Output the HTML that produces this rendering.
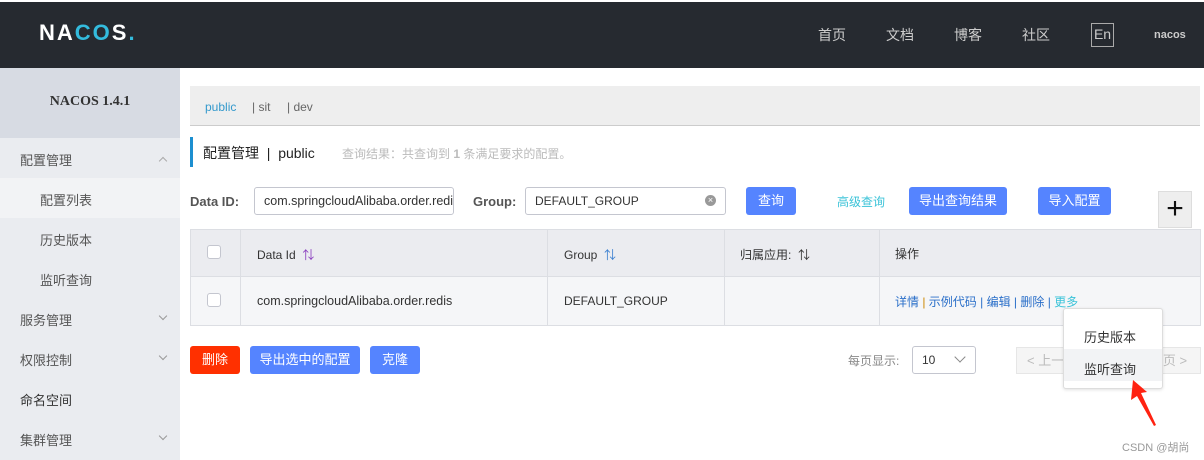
<!DOCTYPE html>
<html><head><meta charset="utf-8"><style>
*{box-sizing:border-box;margin:0;padding:0}
body{width:1204px;height:460px;overflow:hidden;background:#fff;font-family:"Liberation Sans","Noto Sans CJK SC",sans-serif;font-size:12px;color:#333;position:relative}
.a{position:absolute}
.top{left:0;top:2px;width:1204px;height:66px;background:#262a30}
.nav{color:#ccc;font-size:14px;top:25px}
.side{left:0;top:68px;width:180px;height:392px;background:#eaecf0}
.si{position:absolute;left:20px;font-size:13px;color:#555}
.sub{left:40px}
.chev{position:absolute;left:160px;width:6px;height:6px;border-right:1px solid #999;border-bottom:1px solid #999;transform:rotate(45deg)}
.btn{position:absolute;background:#5584ff;color:#fff;border-radius:3px;font-size:13px;text-align:center;line-height:27px;height:28px}
.inp{position:absolute;border:1px solid #c4c6cf;border-radius:3px;height:28px;line-height:26px;padding-left:9px;font-size:12px;background:#fff;overflow:hidden;white-space:nowrap}
.cb{position:absolute;width:14px;height:14px;border:1px solid #c4c6cf;border-radius:3px;background:#fff}
.vl{position:absolute;width:1px;background:#dcdee3}
.lk{color:#2a6fc9}
</style></head><body>
<div class="a top"></div>
<div class="a" style="left:39px;top:20px;color:#fff;font-size:22px;font-weight:bold;letter-spacing:2px">NA<span style="color:#3bd">CO</span>S<span style="color:#3bd">.</span></div>
<div class="a nav" style="left:818px">首页</div>
<div class="a nav" style="left:886px">文档</div>
<div class="a nav" style="left:954px">博客</div>
<div class="a nav" style="left:1022px">社区</div>
<div class="a" style="left:1091px;top:23px;width:23px;height:24px;border:1px solid #aaa;color:#ccc;font-size:14px;text-align:center;line-height:21px">En</div>
<div class="a" style="left:1154px;top:29px;color:#ccc;font-size:11px;font-weight:bold">nacos</div>

<div class="a side"></div>
<div class="a" style="left:0;top:68px;width:180px;height:70px;background:#d7dbe3;text-align:center;line-height:68px;font-weight:bold;font-size:14px;color:#333;font-family:'Liberation Serif','Noto Serif CJK SC',serif">NACOS 1.4.1</div>
<div class="a" style="left:0;top:178px;width:180px;height:40px;background:#f2f3f5"></div>
<div class="si" style="top:150px">配置管理</div><div class="chev" style="top:158px;transform:rotate(225deg);border-color:#aaa"></div>
<div class="si sub" style="top:190px">配置列表</div>
<div class="si sub" style="top:230px">历史版本</div>
<div class="si sub" style="top:270px">监听查询</div>
<div class="si" style="top:310px">服务管理</div><div class="chev" style="top:313px"></div>
<div class="si" style="top:350px">权限控制</div><div class="chev" style="top:353px"></div>
<div class="si" style="top:390px;color:#333">命名空间</div>
<div class="si" style="top:430px">集群管理</div><div class="chev" style="top:433px"></div>

<div class="a" style="left:190px;top:86px;width:1010px;height:40px;background:#eee;border-bottom:1px solid #ccc"></div>
<div class="a" style="left:205px;top:100px;color:#39c;font-size:12px">public</div>
<div class="a" style="left:252px;top:100px;color:#666">| sit</div>
<div class="a" style="left:287px;top:100px;color:#666">| dev</div>

<div class="a" style="left:190px;top:137px;width:3px;height:30px;background:#1c8fd0"></div>
<div class="a" style="left:203px;top:143px;font-size:14px;color:#222">配置管理 &nbsp;|&nbsp; public</div>
<div class="a" style="left:342px;top:145px;font-size:12px;color:#bbb">查询结果：共查询到 <b>1</b> 条满足要求的配置。</div>

<div class="a" style="left:190px;top:194px;font-size:13px;font-weight:bold;color:#555">Data ID:</div>
<div class="inp" style="left:254px;top:187px;width:200px;font-size:12.5px">com.springcloudAlibaba.order.redis</div>
<div class="a" style="left:473px;top:194px;font-size:13px;font-weight:bold;color:#555">Group:</div>
<div class="inp" style="left:525px;top:187px;width:201px">DEFAULT_GROUP</div>
<div class="a" style="left:705px;top:195px;width:11px;height:11px;border-radius:50%;background:#999;color:#fff;font-size:9px;line-height:11px;text-align:center">×</div>
<div class="btn" style="left:746px;top:187px;width:50px">查询</div>
<div class="a" style="left:837px;top:193px;color:#3bc3d8;font-size:12px">高级查询</div>
<div class="btn" style="left:909px;top:187px;width:98px">导出查询结果</div>
<div class="btn" style="left:1038px;top:187px;width:73px">导入配置</div>
<div class="a" style="left:1158px;top:191px;width:34px;height:37px;background:#eee;border:1px solid #ddd;text-align:center;line-height:33px;font-size:30px;color:#111;font-weight:300">+</div>

<div class="a" style="left:190px;top:229px;width:1011px;height:97px;border:1px solid #dcdee3;background:#f5f6f8"></div>
<div class="a" style="left:191px;top:230px;width:1009px;height:47px;background:#ebecf0;border-bottom:1px solid #dcdee3"></div>
<div class="vl" style="left:240px;top:230px;height:95px"></div>
<div class="vl" style="left:547px;top:230px;height:95px"></div>
<div class="vl" style="left:724px;top:230px;height:95px"></div>
<div class="vl" style="left:879px;top:230px;height:95px"></div>
<div class="cb" style="left:207px;top:245px"></div>
<div class="cb" style="left:207px;top:293px"></div>
<div class="a" style="left:257px;top:246px;color:#333">Data Id &nbsp;<span style="color:#8a3fbf">⇅</span></div>
<div class="a" style="left:564px;top:246px;color:#333">Group &nbsp;<span style="color:#3a7fd0">⇅</span></div>
<div class="a" style="left:740px;top:246px;color:#333">归属应用: &nbsp;⇅</div>
<div class="a" style="left:895px;top:245px;color:#333">操作</div>
<div class="a" style="left:257px;top:294px;color:#333;font-size:12.5px">com.springcloudAlibaba.order.redis</div>
<div class="a" style="left:564px;top:294px;color:#333">DEFAULT_GROUP</div>
<div class="a lk" style="left:895px;top:293px">详情 <span style="color:#c80">|</span> 示例代码 | 编辑 | 删除 | <span style="color:#3bc3d8">更多</span></div>

<div class="btn" style="left:190px;top:346px;width:50px;background:#ff3000">删除</div>
<div class="btn" style="left:250px;top:346px;width:110px">导出选中的配置</div>
<div class="btn" style="left:370px;top:346px;width:50px">克隆</div>

<div class="a" style="left:848px;top:352px;color:#888">每页显示:</div>
<div class="inp" style="left:912px;top:346px;width:64px;height:28px">10</div>
<div class="chev" style="left:956px;top:353px;width:8px;height:8px;border-color:#888"></div>
<div class="a" style="left:1016px;top:347px;width:185px;height:27px;background:#f5f5f5;border:1px solid #e6e6e6;color:#bbb;font-size:13px;line-height:25px;padding-left:10px">&lt; 上一 <span style="margin-left:95px">页 &gt;</span></div>

<div class="a" style="left:1063px;top:308px;width:100px;height:81px;background:#fff;border:1px solid #ddd;border-radius:3px;box-shadow:0 1px 3px rgba(0,0,0,.12)"></div>
<div class="a" style="left:1064px;top:349px;width:98px;height:32px;background:#f2f3f5"></div>
<div class="a" style="left:1084px;top:327px;font-size:13px;color:#333">历史版本</div>
<div class="a" style="left:1084px;top:359px;font-size:13px;color:#333">监听查询</div>
<svg class="a" style="left:1128px;top:380px" width="32" height="46"><polygon points="5,0 3,20 9,16 26,46 28,45 13,13 19,12" fill="#f21"/></svg>
<div class="a" style="left:1122px;top:439px;color:#999;font-size:11px">CSDN @胡尚</div>
</body></html>
